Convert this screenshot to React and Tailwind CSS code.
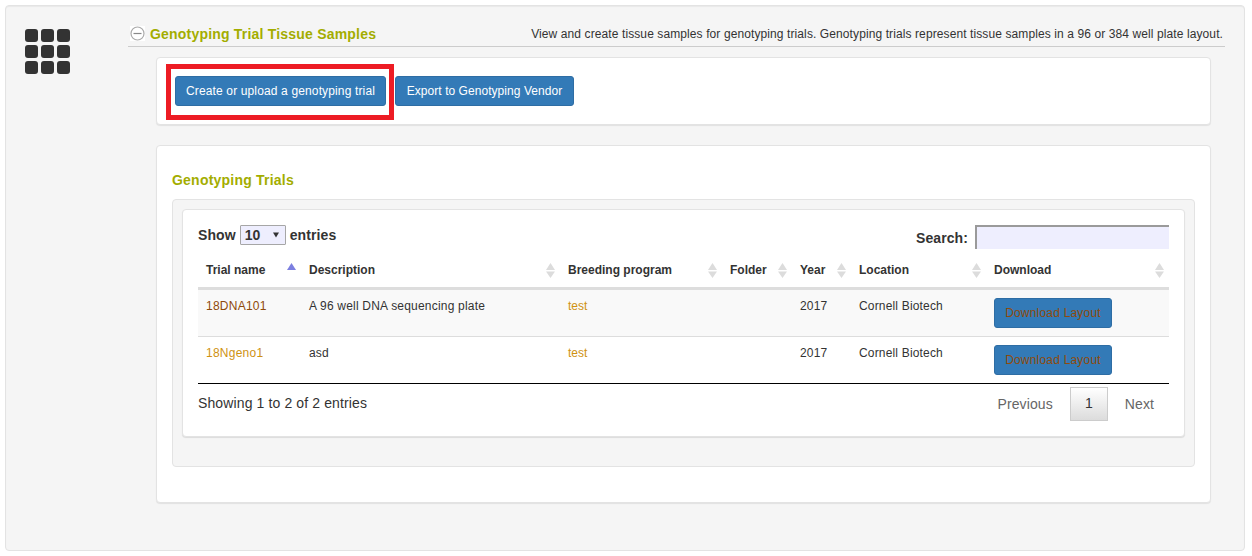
function Sort({ active }) {
  return (
    <svg width="9" height="15" viewBox="0 0 9 15" className="shrink-0">
      <path d="M4.5 0 L9 7 L0 7 Z" fill={active ? "#7c7fe0" : "#dcdcdc"} />
      {!active && <path d="M4.5 15 L9 8.5 L0 8.5 Z" fill="#dcdcdc" />}
    </svg>
  );
}

const cols = [
  ["Trial name", "w-[103px]"],
  ["Description", "w-[259px]"],
  ["Breeding program", "w-[162px]"],
  ["Folder", "w-[70px]"],
  ["Year", "w-[59px]"],
  ["Location", "w-[135px]"],
  ["Download", "w-[183px]"],
];

const rows = [
  { name: "18DNA101", nameCls: "text-[#8f4a0b]", desc: "A 96 well DNA sequencing plate", bg: "bg-[#f9f9f9]", h: "h-[47px]" },
  { name: "18Ngeno1", nameCls: "text-[#cf9212]", desc: "asd", bg: "bg-white", h: "h-[47px]" },
];

function Grip() {
  return (
    <div className="grid grid-cols-[12.5px_12.5px_12.5px] gap-x-[3.5px] gap-y-[3.5px] w-[45px]">
      {Array.from({ length: 9 }).map((_, i) => (
        <div key={i} className="h-[12.5px] w-[12.5px] rounded-[3px] bg-[#333333]" />
      ))}
    </div>
  );
}

export default function App() {
  return (
    <div className="w-[1252px] h-[556px] bg-white pt-[5px] pl-[5px] font-['Liberation_Sans',Arial,sans-serif] text-[#333333] text-[12px] overflow-hidden">
      <div className="w-[1240px] h-[546px] bg-[#f5f5f5] border border-[#e3e3e3] rounded-[4px] shadow-[inset_0_1px_1px_rgba(0,0,0,0.05)] flex">
        <div className="w-[122px] shrink-0 pl-[19px] pt-[23px]">
          <Grip />
        </div>
        <div className="w-[1097px] pt-[18px]">
          <div className="h-[23px] border-b border-[#cccccc] flex items-start pl-[2px]">
            <svg width="15" height="15" viewBox="0 0 15 15" className="mt-[2px] bg-white">
              <circle cx="7.5" cy="7.5" r="6.5" fill="none" stroke="#aaaaaa" strokeWidth="1.2" />
              <path d="M3.5 7.5 H11.5" stroke="#888888" strokeWidth="1.2" />
            </svg>
            <span className="ml-[5px] text-[14px] leading-[20px] font-bold text-[#a3ad00] tracking-[0.2px]">Genotyping Trial Tissue Samples</span>
            <span className="ml-auto mr-[2px] text-[12px] leading-[20px] text-[#333333] tracking-[0.1px]">View and create tissue samples for genotyping trials. Genotyping trials represent tissue samples in a 96 or 384 well plate layout.</span>
          </div>

          <div className="ml-[28px] mt-[10px] w-[1055px] h-[68px] bg-white border border-[#e3e3e3] rounded-[4px] shadow-[0_1px_1px_rgba(0,0,0,0.08)] flex items-start pl-[9px] pt-[6px]">
            <div className="w-[228px] h-[56px] border-[5px] border-[#ed1c24] pl-[4px] pt-[7px]">
              <button className="w-[211px] h-[30px] bg-[#337ab7] border border-[#2e6da4] rounded-[3px] text-white text-[12px] tracking-[0.14px]">Create or upload a genotyping trial</button>
            </div>
            <button className="ml-[1px] mt-[12px] w-[179px] h-[30px] bg-[#337ab7] border border-[#2e6da4] rounded-[3px] text-white text-[12px] tracking-[0.05px]">Export to Genotyping Vendor</button>
          </div>

          <div className="ml-[28px] mt-[20px] w-[1055px] h-[358px] bg-white border border-[#e3e3e3] rounded-[4px] shadow-[0_1px_1px_rgba(0,0,0,0.08)] px-[15px] pt-[25px]">
            <div className="h-[18px] leading-[18px] text-[14px] font-bold text-[#a3ad00] tracking-[0.22px]">Genotyping Trials</div>
            <div className="mt-[10px] w-[1023px] h-[268px] bg-[#f5f5f5] border border-[#e3e3e3] rounded-[4px] p-[9px]">
              <div className="w-[1003px] h-[228px] bg-white border border-[#e3e3e3] rounded-[4px] shadow-[0_1px_1px_rgba(0,0,0,0.1)] pl-[15px] pt-[15px]">
                <div className="w-[971px] h-[32px] flex justify-between items-start">
                  <div className="flex items-center h-[20px] text-[14px] font-bold tracking-[0.1px]">
                    <span>Show</span>
                    <span className="mx-[4px] w-[46px] h-[20px] bg-[#eeeefe] border border-[#a6a6a6] rounded-[1px] flex items-center justify-between px-[4px]">
                      <span>10</span>
                      <svg width="6" height="6" viewBox="0 0 6 6" className="mr-[2px]"><path d="M0 0.5H6L3 5.5Z" fill="#333333" /></svg>
                    </span>
                    <span>entries</span>
                  </div>
                  <div className="flex items-start text-[14px] font-bold tracking-[0.1px]">
                    <span className="mt-[5px] mr-[7px] leading-[16px]">Search:</span>
                    <div className="w-[194px] h-[24px] bg-[#eeeefe] border-l-2 border-t-2 border-[#9a9a9a]" />
                  </div>
                </div>

                <table className="w-[971px] table-fixed border-collapse">
                  <thead>
                    <tr className="h-[31px] border-b-[3px] border-[#dddddd]">
                      {cols.map(([label, w], i) => (
                        <th key={label} className={`${w} p-0 pl-[8px] pr-[5px] text-left font-bold text-[12px] align-top`}>
                          <div className="flex justify-between items-start pt-[5px] leading-[17px] text-[12px]">
                            <span className="whitespace-nowrap">{label}</span>
                            <span className="mt-[1px]"><Sort active={i === 0} /></span>
                          </div>
                        </th>
                      ))}
                    </tr>
                  </thead>
                  <tbody>
                    {rows.map((r, idx) => (
                      <tr key={r.name} className={`${r.h} ${r.bg} ${idx === 0 ? "border-b border-[#dddddd]" : "border-b border-black"}`}>
                        <td className={`p-0 pl-[8px] pt-[8px] align-top leading-[17px] tracking-[0.25px] ${r.nameCls}`}>{r.name}</td>
                        <td className="p-0 pl-[8px] pt-[8px] align-top leading-[17px] tracking-[0.2px]">{r.desc}</td>
                        <td className="p-0 pl-[8px] pt-[8px] align-top leading-[17px] text-[#cf9212]">test</td>
                        <td className="p-0" />
                        <td className="p-0 pl-[8px] pt-[8px] align-top leading-[17px] tracking-[0.2px]">2017</td>
                        <td className="p-0 pl-[8px] pt-[8px] align-top leading-[17px] tracking-[0.17px]">Cornell Biotech</td>
                        <td className="p-0 pl-[8px] pt-[8px] pb-[8px] align-top">
                          <button className="block w-[118px] h-[30px] bg-[#337ab7] border border-[#2e6da4] rounded-[3px] text-[#8f4a0b] text-[12px] tracking-[0.2px]">Download Layout</button>
                        </td>
                      </tr>
                    ))}
                  </tbody>
                </table>

                <div className="w-[971px] flex justify-between items-start pt-[3px]">
                  <span className="mt-[8px] text-[14px] leading-[16px] tracking-[0.12px]">Showing 1 to 2 of 2 entries</span>
                  <div className="flex items-center text-[14px] pr-[15px] text-[#666666]">
                    <span className="mr-[17px] mt-[1px] tracking-[0.1px]">Previous</span>
                    <span className="w-[38px] h-[34px] flex items-center justify-center text-[#333333] border border-[#cccccc] bg-gradient-to-b from-white to-[#dcdcdc]">1</span>
                    <span className="ml-[17px] mt-[1px] tracking-[0.1px]">Next</span>
                  </div>
                </div>
              </div>
            </div>
          </div>
        </div>
      </div>
    </div>
  );
}
